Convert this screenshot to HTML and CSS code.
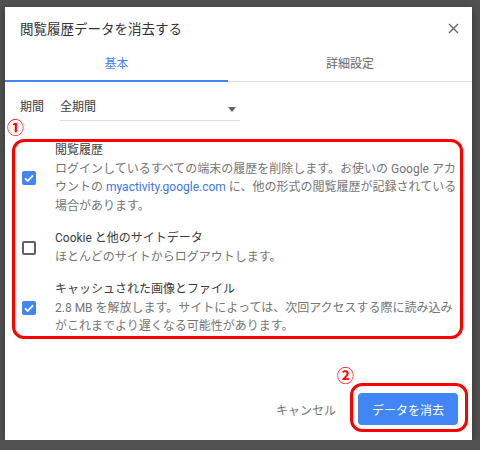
FILE: index.html
```html
<!DOCTYPE html>
<html lang="ja">
<head>
  <meta charset="UTF-8">
  <title>閲覧履歴データを消去する</title>
  <meta name="viewport" content="width=device-width, initial-scale=1">
  <link rel="stylesheet" href="styles.css">
</head>
<body>
  <div class="dialog">
    <div class="dialog-header">
      <h1 class="dialog-title">閲覧履歴データを消去する</h1>
      <button type="button" class="close-btn" aria-label="閉じる">
        <svg width="11" height="11" viewBox="0 0 11 11"><path d="M1 1L10 10M10 1L1 10" stroke="#666" stroke-width="1.4" fill="none"/></svg>
      </button>
    </div>

    <div class="tabs">
      <div class="tab active">基本</div>
      <div class="tab">詳細設定</div>
    </div>

    <div class="period-row">
      <span class="period-label">期間</span>
      <div class="period-select">
        <span>全期間</span>
        <span class="arrow"></span>
      </div>
    </div>

    <div class="items">
      <span class="mark-num num-1">①</span>
      <div class="mark-box box-1"></div>

      <div class="item">
        <span class="checkbox checked">
          <svg width="14" height="14" viewBox="0 0 14 14"><path d="M3 7.3L5.8 10L11 4.3" stroke="#fff" stroke-width="1.8" fill="none"/></svg>
        </span>
        <div class="item-text">
          <div class="item-title">閲覧履歴</div>
          <div class="item-desc">ログインしているすべての端末の履歴を削除します。お使いの Google アカウントの <span class="link">myactivity.google.com</span> に、他の形式の閲覧履歴が記録されている場合があります。</div>
        </div>
      </div>

      <div class="item">
        <span class="checkbox"></span>
        <div class="item-text">
          <div class="item-title">Cookie と他のサイトデータ</div>
          <div class="item-desc">ほとんどのサイトからログアウトします。</div>
        </div>
      </div>

      <div class="item">
        <span class="checkbox checked">
          <svg width="14" height="14" viewBox="0 0 14 14"><path d="M3 7.3L5.8 10L11 4.3" stroke="#fff" stroke-width="1.8" fill="none"/></svg>
        </span>
        <div class="item-text">
          <div class="item-title">キャッシュされた画像とファイル</div>
          <div class="item-desc">2.8 MB を解放します。サイトによっては、次回アクセスする際に読み込みがこれまでより遅くなる可能性があります。</div>
        </div>
      </div>
    </div>

    <div class="dialog-footer">
      <button type="button" class="btn-cancel">キャンセル</button>
      <div class="confirm-wrap">
        <span class="mark-num num-2">②</span>
        <button type="button" class="btn-primary">データを消去</button>
        <div class="mark-box box-2"></div>
      </div>
    </div>
  </div>
</body>
</html>
```

FILE: styles.css
```css
:root {
  --blue: #4285f4;
  --mark-red: #ff0000;
  --text-dark: #3c3c3c;
  --text-gray: #757575;
  --line: #e0e0e0;
}
body {
  margin: 0;
  background: #515151;
  font-family: Roboto, "Noto Sans CJK JP", sans-serif;
  color: var(--text-dark);
}
.dialog {
  margin: 7px 0 0 5px;
  width: 467px;
  height: 433px;
  background: #fff;
  display: flex;
  flex-direction: column;
  box-shadow: 0 2px 8px rgba(0,0,0,0.35);
}
.dialog-header {
  height: 42px;
  display: flex;
  align-items: center;
  justify-content: space-between;
  padding: 0 13px 0 15px;
}
.dialog-title {
  margin: 0;
  font-size: 13.5px;
  font-weight: 400;
  color: #333;
}
.close-btn {
  border: none;
  background: none;
  padding: 0;
  width: 11px;
  height: 11px;
  display: flex;
  cursor: pointer;
}
.tabs {
  display: flex;
  height: 33px;
  box-shadow: inset 0 -1px 0 var(--line);
}
.tab {
  font-size: 12px;
  line-height: 16px;
  padding: 7px 0 10px;
  text-align: center;
  color: #666;
  flex: 1;
}
.tab.active {
  flex: 0 0 223px;
  color: var(--blue);
  padding-bottom: 8px;
  border-bottom: 2px solid var(--blue);
}
.period-row {
  display: flex;
  margin-top: 17px;
  padding-left: 15px;
  font-size: 12px;
  line-height: 16px;
}
.period-label {
  width: 40px;
}
.period-select {
  width: 180px;
  display: flex;
  justify-content: space-between;
  padding-bottom: 5px;
  border-bottom: 1px solid var(--line);
}
.arrow {
  width: 0;
  height: 0;
  margin: 8px 4px 0 0;
  border-left: 4.5px solid transparent;
  border-right: 4.5px solid transparent;
  border-top: 5px solid #666;
}
.items {
  position: relative;
  margin-top: 20px;
  display: flex;
  flex-direction: column;
  gap: 14px;
}
.item {
  display: flex;
  align-items: center;
  padding-left: 17px;
}
.checkbox {
  flex: 0 0 auto;
  width: 14px;
  height: 14px;
  box-sizing: border-box;
  border: 2px solid #5f6368;
  border-radius: 2px;
  margin-right: 19px;
}
.checkbox.checked {
  background: var(--blue);
  border: none;
}
.checkbox svg {
  display: block;
}
.item-text {
  width: 408px;
  font-size: 12px;
  line-height: 18.5px;
}
.item-title {
  color: var(--text-dark);
}
.item-desc {
  color: var(--text-gray);
}
.link {
  color: #3b78e7;
}
.dialog-footer {
  margin-top: auto;
  display: flex;
  justify-content: flex-end;
  align-items: center;
  padding: 0 14px 15px 0;
}
.btn-cancel {
  font-family: inherit;
  font-size: 12px;
  color: var(--text-gray);
  background: none;
  border: none;
  height: 32px;
  padding: 0 12px;
  margin-right: 10px;
}
.confirm-wrap {
  position: relative;
}
.btn-primary {
  display: block;
  font-family: inherit;
  font-size: 12px;
  width: 100px;
  height: 32px;
  color: #fff;
  background: var(--blue);
  border: none;
  border-radius: 4px;
}
.mark-box {
  position: absolute;
  border: 3px solid var(--mark-red);
  border-radius: 12px;
  pointer-events: none;
}
.box-1 {
  top: -2px;
  bottom: -3px;
  left: 7px;
  right: 9px;
}
.box-2 {
  top: -10px;
  bottom: -7px;
  left: -8px;
  right: -10px;
}
.mark-num {
  position: absolute;
  color: var(--mark-red);
  font-family: "Noto Sans CJK JP", sans-serif;
  font-weight: 700;
  font-size: 17px;
  line-height: 17px;
}
.num-1 {
  left: 2px;
  top: -23px;
}
.num-2 {
  left: -21px;
  top: -27px;
}
```
